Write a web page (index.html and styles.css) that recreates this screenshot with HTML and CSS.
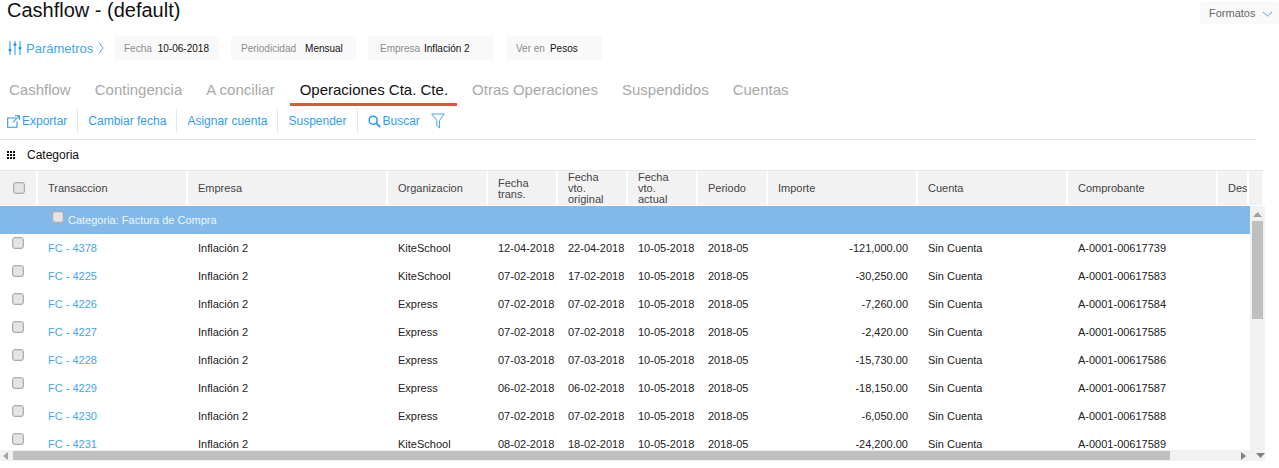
FILE: index.html
```html
<!DOCTYPE html>
<html lang="es">
<head>
<meta charset="utf-8">
<title>Cashflow</title>
<link rel="stylesheet" href="styles.css">
</head>
<body>
<header class="title-row">
  <h1 class="title">Cashflow - (default)</h1>
  <button class="formats">Formatos
    <svg class="formats-icon" width="11" height="6" viewBox="0 0 11 6"><path d="M1 1l4.500 4L10 1" fill="none" stroke="#5aa5e6" stroke-width="1"/></svg>
  </button>
</header>
<section class="params">
  <a class="params-link">
    <svg class="params-icon" width="14" height="16" viewBox="0 0 14 16"><path d="M2 1v14M7 1v14M12 1v14" stroke="#2196f3" stroke-width="1" fill="none"/><circle cx="2" cy="10" r="1.500" fill="#2196f3"/><circle cx="7" cy="4.500" r="1.500" fill="#2196f3"/><circle cx="12" cy="8" r="1.500" fill="#2196f3"/></svg>
    <span>Parámetros</span>
    <svg class="params-chev" width="6" height="12" viewBox="0 0 6 12"><path d="M1 .5L5 6l-4 5.500" fill="none" stroke="#5aa5e6" stroke-width="1"/></svg>
  </a>
  <div class="chip chip-fecha"><span class="chip-label">Fecha</span><span class="chip-value">10-06-2018</span></div>
  <div class="chip chip-per"><span class="chip-label">Periodicidad</span><span class="chip-value">Mensual</span></div>
  <div class="chip chip-emp"><span class="chip-label">Empresa</span><span class="chip-value">Inflación 2</span></div>
  <div class="chip chip-ver"><span class="chip-label">Ver en</span><span class="chip-value">Pesos</span></div>
</section>
<nav class="tabs">
  <a class="tab">Cashflow</a>
  <a class="tab">Contingencia</a>
  <a class="tab">A conciliar</a>
  <a class="tab tab-active">Operaciones Cta. Cte.</a>
  <a class="tab">Otras Operaciones</a>
  <a class="tab">Suspendidos</a>
  <a class="tab">Cuentas</a>
</nav>
<section class="toolbar">
  <a class="tool tool-export"><svg width="13" height="13" viewBox="0 0 13 13"><path d="M9 3H.700v9.300H10V6.500M6 7.500L12 1M8 .700h4.300V5" fill="none" stroke="#2196f3" stroke-width="1.100"/></svg>Exportar</a>
  <a class="tool">Cambiar fecha</a>
  <a class="tool">Asignar cuenta</a>
  <a class="tool">Suspender</a>
  <a class="tool tool-search"><svg width="13" height="13" viewBox="0 0 13 13"><circle cx="5.200" cy="5.200" r="4" fill="none" stroke="#2196f3" stroke-width="1.500"/><path d="M8.200 8.200l4 4" stroke="#2196f3" stroke-width="1.800"/></svg>Buscar</a>
  <svg class="filter" width="14" height="16" viewBox="0 0 14 16"><path d="M.700 1h12.600L8.500 7.500V15L5.800 12.500v-5z" fill="none" stroke="#42a5f5" stroke-width="1"/></svg>
</section>
<section class="grouping">
  <svg class="grip" width="8" height="8" viewBox="0 0 8 8"><path d="M0 0h2v2H0zM3 0h2v2H3zM6 0h2v2H6zM0 3h2v2H0zM3 3h2v2H3zM6 3h2v2H6zM0 6h2v2H0zM3 6h2v2H3zM6 6h2v2H6z" fill="#111"/></svg>
  <span>Categoria</span>
</section>
<section class="grid">
  <div class="row head">
    <div class="cell check-cell"><span class="box"></span></div>
    <div class="cell">Transaccion</div>
    <div class="cell">Empresa</div>
    <div class="cell">Organizacion</div>
    <div class="cell cell-two">Fecha<br>trans.</div>
    <div class="cell">Fecha<br>vto.<br>original</div>
    <div class="cell">Fecha<br>vto.<br>actual</div>
    <div class="cell">Periodo</div>
    <div class="cell">Importe</div>
    <div class="cell">Cuenta</div>
    <div class="cell">Comprobante</div>
    <div class="cell">Des</div>
    <div class="cell"></div>
  </div>
  <div class="viewport">
    <div class="body">
      <div class="group"><span class="box"></span><span>Categoria: Factura de Compra</span></div>
      <div class="row"><div class="cell check-cell"><span class="box"></span></div><a class="cell link">FC - 4378</a><div class="cell">Inflación 2</div><div class="cell">KiteSchool</div><div class="cell">12-04-2018</div><div class="cell">22-04-2018</div><div class="cell">10-05-2018</div><div class="cell">2018-05</div><div class="cell num">-121,000.00</div><div class="cell">Sin Cuenta</div><div class="cell">A-0001-00617739</div><div class="cell"></div></div>
      <div class="row"><div class="cell check-cell"><span class="box"></span></div><a class="cell link">FC - 4225</a><div class="cell">Inflación 2</div><div class="cell">KiteSchool</div><div class="cell">07-02-2018</div><div class="cell">17-02-2018</div><div class="cell">10-05-2018</div><div class="cell">2018-05</div><div class="cell num">-30,250.00</div><div class="cell">Sin Cuenta</div><div class="cell">A-0001-00617583</div><div class="cell"></div></div>
      <div class="row"><div class="cell check-cell"><span class="box"></span></div><a class="cell link">FC - 4226</a><div class="cell">Inflación 2</div><div class="cell">Express</div><div class="cell">07-02-2018</div><div class="cell">07-02-2018</div><div class="cell">10-05-2018</div><div class="cell">2018-05</div><div class="cell num">-7,260.00</div><div class="cell">Sin Cuenta</div><div class="cell">A-0001-00617584</div><div class="cell"></div></div>
      <div class="row"><div class="cell check-cell"><span class="box"></span></div><a class="cell link">FC - 4227</a><div class="cell">Inflación 2</div><div class="cell">Express</div><div class="cell">07-02-2018</div><div class="cell">07-02-2018</div><div class="cell">10-05-2018</div><div class="cell">2018-05</div><div class="cell num">-2,420.00</div><div class="cell">Sin Cuenta</div><div class="cell">A-0001-00617585</div><div class="cell"></div></div>
      <div class="row"><div class="cell check-cell"><span class="box"></span></div><a class="cell link">FC - 4228</a><div class="cell">Inflación 2</div><div class="cell">Express</div><div class="cell">07-03-2018</div><div class="cell">07-03-2018</div><div class="cell">10-05-2018</div><div class="cell">2018-05</div><div class="cell num">-15,730.00</div><div class="cell">Sin Cuenta</div><div class="cell">A-0001-00617586</div><div class="cell"></div></div>
      <div class="row"><div class="cell check-cell"><span class="box"></span></div><a class="cell link">FC - 4229</a><div class="cell">Inflación 2</div><div class="cell">Express</div><div class="cell">06-02-2018</div><div class="cell">06-02-2018</div><div class="cell">10-05-2018</div><div class="cell">2018-05</div><div class="cell num">-18,150.00</div><div class="cell">Sin Cuenta</div><div class="cell">A-0001-00617587</div><div class="cell"></div></div>
      <div class="row"><div class="cell check-cell"><span class="box"></span></div><a class="cell link">FC - 4230</a><div class="cell">Inflación 2</div><div class="cell">Express</div><div class="cell">07-02-2018</div><div class="cell">07-02-2018</div><div class="cell">10-05-2018</div><div class="cell">2018-05</div><div class="cell num">-6,050.00</div><div class="cell">Sin Cuenta</div><div class="cell">A-0001-00617588</div><div class="cell"></div></div>
      <div class="row"><div class="cell check-cell"><span class="box"></span></div><a class="cell link">FC - 4231</a><div class="cell">Inflación 2</div><div class="cell">KiteSchool</div><div class="cell">08-02-2018</div><div class="cell">18-02-2018</div><div class="cell">10-05-2018</div><div class="cell">2018-05</div><div class="cell num">-24,200.00</div><div class="cell">Sin Cuenta</div><div class="cell">A-0001-00617589</div><div class="cell"></div></div>
    </div>
    <div class="vbar">
      <svg class="arrow-up" width="9" height="5" viewBox="0 0 9 5"><path d="M4.500 0L9 5H0z" fill="#a3a3a3"/></svg>
      <div class="vthumb"></div>
    </div>
  </div>
  <div class="hbar">
    <svg class="arrow-left" width="5" height="8" viewBox="0 0 5 8"><path d="M0 4l5-4v8z" fill="#a3a3a3"/></svg>
    <div class="hthumb"></div>
    <svg class="arrow-right" width="5" height="8" viewBox="0 0 5 8"><path d="M5 4L0 0v8z" fill="#7f7f7f"/></svg>
    <svg class="arrow-down" width="9" height="5" viewBox="0 0 9 5"><path d="M4.500 5L9 0H0z" fill="#7f7f7f"/></svg>
  </div>
</section>
</body>
</html>
```
FILE: styles.css
```css
* { box-sizing: border-box; }
html, body { margin: 0; padding: 0; }
body {
  width: 1279px;
  height: 468px;
  overflow: hidden;
  background: #fff;
  color: #222;
  font-family: "Liberation Sans", Arial, sans-serif;
  font-size: 11px;
}
.title-row {
  display: flex;
  justify-content: space-between;
  align-items: flex-start;
  height: 36px;
}
.title {
  margin: 0 0 0 7px;
  font-size: 20px;
  line-height: 21px;
  font-weight: 400;
  color: #111;
}
.formats {
  display: flex;
  align-items: center;
  gap: 7px;
  width: 79px;
  height: 23px;
  margin-top: 1px;
  padding: 0 0 0 9px;
  border: 0;
  border-radius: 3px;
  background: #f9f9f9;
  color: #666;
  font: 11px "Liberation Sans", Arial, sans-serif;
}
.formats-icon { margin-top: 2px; }
.params {
  display: flex;
  align-items: center;
  height: 24px;
  padding-left: 8px;
}
.params-link {
  display: flex;
  align-items: center;
  width: 106px;
  color: #42a5f5;
  font-size: 13px;
}
.params-icon { margin-right: 4px; }
.params-chev { margin-left: 5px; }
.chip {
  display: flex;
  align-items: center;
  height: 24px;
  margin-right: 12px;
  padding-left: 10px;
  border-radius: 3px;
  background: #f9f9f9;
  font-size: 10px;
}
.chip-fecha { width: 105px; gap: 6px; }
.chip-per { width: 125px; gap: 9px; }
.chip-emp { width: 126px; padding-left: 12px; gap: 4px; }
.chip-ver { width: 96px; gap: 5px; }
.chip-label { color: #8c8c8c; }
.chip-value { color: #111; }
.tabs {
  display: flex;
  height: 30px;
  margin-top: 14px;
}
.tab {
  height: 32px;
  padding: 6px 10px 0 9px;
  margin-right: 5px;
  color: #a8a8a8;
  font-size: 15px;
  line-height: 20px;
}
.tab-active {
  padding-left: 10px;
  padding-right: 9px;
  margin-right: 6px;
  color: #111;
  border-bottom: 3px solid #e8513a;
}
.toolbar {
  display: flex;
  align-items: center;
  height: 34px;
  margin-top: 2px;
  padding: 1px 0 4px;
  width: 1256px;
  border-bottom: 1px solid #e6e6e6;
}
.tool {
  display: flex;
  align-items: center;
  height: 24px;
  padding: 0 10px;
  color: #2f9df4;
  font-size: 12px;
  border-right: 1px solid #e6e6e6;
}
.tool-export { padding-left: 7px; padding-right: 10px; }
.tool-export svg { margin-right: 2px; }
.tool-search { border-right: 0; }
.tool-search svg { margin-right: 2px; }
.filter { margin-left: 1px; }
.grouping {
  display: flex;
  align-items: center;
  gap: 12px;
  height: 30px;
  padding-left: 7px;
  color: #111;
  font-size: 12px;
}
.grid { width: 1265px; }
.row {
  display: grid;
  grid-template-columns: 38px 150px 200px 100px 70px 70px 70px 70px 150px 150px 150px 32px;
  height: 28px;
  align-items: center;
}
.cell {
  padding-left: 10px;
  white-space: nowrap;
  overflow: hidden;
}
.head {
  grid-template-columns: 38px 150px 200px 100px 70px 70px 70px 70px 150px 150px 150px 31px 15px;
  align-items: stretch;
  height: 36px;
  width: 1264px;
  border-top: 1px solid #e8e8e8;
  background: #f2f2f2;
  color: #444;
  line-height: 11px;
}
.head .cell {
  display: flex;
  flex-direction: column;
  justify-content: center;
  align-items: flex-start;
  border-right: 2px solid #fff;
  border-bottom: 1px solid #fff;
}
.head .cell-two { padding-top: 2px; }
.check-cell {
  align-self: start;
  height: 20px;
  padding: 3px 0 0 12px;
}
.head .check-cell {
  align-self: stretch;
  height: auto;
  padding: 0 0 0 13px;
}
.viewport {
  display: flex;
  height: 244px;
  overflow: hidden;
}
.body { width: 1250px; flex: none; }
.box {
  display: block;
  flex: none;
  width: 12px;
  height: 12px;
  border: 1px solid #ababab;
  border-radius: 3px;
  background: #e4e4e4;
  box-shadow: inset 0 0 0 1px #d6d6d6;
}
.group {
  display: flex;
  align-items: flex-start;
  gap: 4px;
  height: 28px;
  padding: 5px 0 0 52px;
  background: #83b9e8;
  color: #eef5fc;
}
.group span:last-child { margin-top: 3px; }
.link { color: #42a5f5; }
.num { text-align: right; padding-right: 10px; }
.vbar {
  width: 15px;
  flex: none;
  background: #f1f1f1;
  display: flex;
  flex-direction: column;
  align-items: center;
  padding-top: 6px;
}
.vthumb {
  width: 11px;
  height: 98px;
  margin-top: 4px;
  background: #bfbfbf;
}
.hbar {
  display: flex;
  align-items: center;
  height: 11px;
  background: #f1f1f1;
  padding-left: 3px;
}
.hthumb {
  width: 1157px;
  height: 9px;
  margin-left: 5px;
  background: #bfbfbf;
}
.arrow-right { margin-left: 71px; }
.arrow-down { margin-left: 10px; }
```
